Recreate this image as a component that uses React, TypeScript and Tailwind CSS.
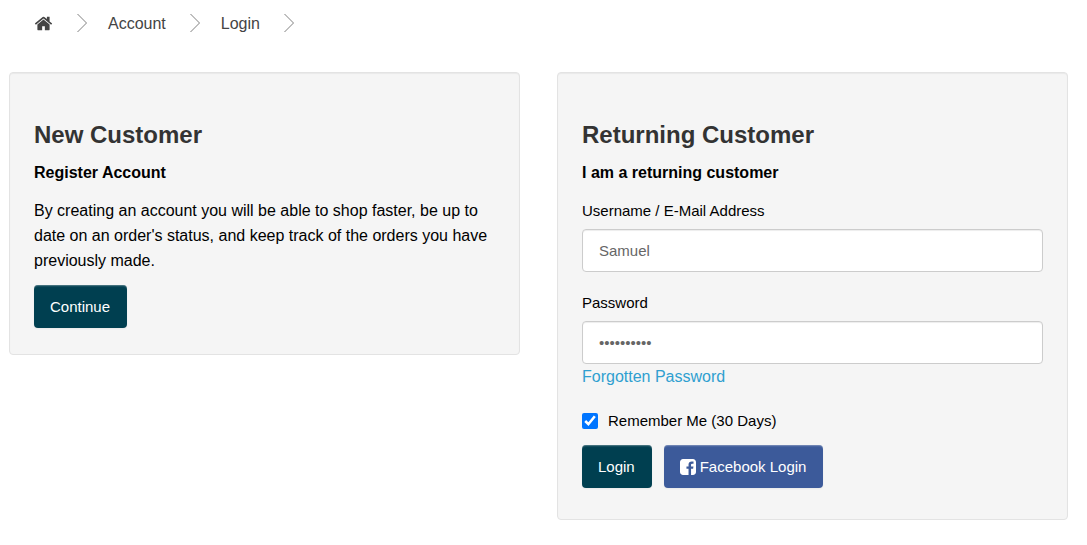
import { ReactNode, useState } from 'react';

const HomeIcon = () => (
  <svg className="h-[19px] w-[19px]" viewBox="0 0 1792 1792" fill="currentColor" aria-hidden="true">
    <path d="M1472 992v480q0 26-19 45t-45 19h-384v-384h-256v384h-384q-26 0-45-19t-19-45v-480q0-1 .5-3t.5-3l575-474 575 474q1 2 1 6zm223-69l-62 74q-8 9-21 11h-3q-13 0-21-7l-692-577-692 577q-12 8-24 7-13-2-21-11l-62-74q-8-10-7-23.5t11-21.5l719-599q32-26 76-26t76 26l244 204v-195q0-14 9-23t23-9h192q14 0 23 9t9 23v408l219 182q10 8 11 21.5t-7 23.5z" />
  </svg>
);

const FacebookIcon = () => (
  <svg className="h-4 w-4" viewBox="128 128 1536 1536" fill="currentColor" aria-hidden="true">
    <path d="M1376 128q119 0 203.5 84.5t84.5 203.5v960q0 119-84.5 203.5t-203.5 84.5h-188v-595h199l30-232h-229v-148q0-56 23.5-84t91.5-28l122-1v-207q-63-9-178-9-136 0-217.5 80t-81.5 226v171h-200v232h200v595h-532q-119 0-203.5-84.5t-84.5-203.5v-960q0-119 84.5-203.5t203.5-84.5h960z" />
  </svg>
);

const Crumb = ({ label, children }: { label?: string; children: ReactNode }) => (
  <li className="flex items-center gap-6">
    <a href="#" aria-label={label} className="hover:text-[#2f9fd0]">
      {children}
    </a>
    <svg className="h-5 w-[11px]" viewBox="0 0 11 20" fill="none" stroke="#808080" aria-hidden="true">
      <path d="M.5 1l9 9-9 9" />
    </svg>
  </li>
);

const Well = ({ title, subtitle, children }: { title: string; subtitle: string; children: ReactNode }) => (
  <section className="rounded border border-[#e3e3e3] bg-[#f5f5f5] px-6 pt-12 shadow-[inset_0_1px_1px_rgba(0,0,0,0.05)]">
    <h2 className="text-2xl leading-7 font-bold text-[#333]">{title}</h2>
    <p className="mt-[11px] font-bold">{subtitle}</p>
    {children}
  </section>
);

const buttonClass =
  'flex h-[43px] cursor-pointer items-center rounded pr-[17px] pl-4 text-[15px] text-white shadow-[inset_0_1px_0_rgba(255,255,255,0.2),inset_0_2px_1px_rgba(255,255,255,0.08),0_1px_2px_rgba(0,0,0,0.05)]';

const inputClass =
  'block h-[43px] w-full rounded border border-[#ccc] bg-white px-4 text-[15px] text-[#666] shadow-[inset_0_1px_1px_rgba(0,0,0,0.075)] outline-none focus:border-[#66afe9]';

export default function App() {
  const [username, setUsername] = useState('Samuel');
  const [password, setPassword] = useState('samuel1234');
  const [remember, setRemember] = useState(true);

  return (
    <div className="bg-white pr-[19px] pb-6 pl-[9px] font-['Liberation_Sans',Arial,sans-serif] text-base leading-[25px] text-black">
      <nav aria-label="Breadcrumb">
        <ol className="flex h-[46px] items-center gap-5 pl-[25px] text-[#444]">
          <Crumb label="Home">
            <HomeIcon />
          </Crumb>
          <Crumb>Account</Crumb>
          <Crumb>Login</Crumb>
        </ol>
      </nav>

      <main className="mt-[26px] grid grid-cols-2 items-start gap-[37px]">
        <Well title="New Customer" subtitle="Register Account">
          <p className="mt-[13px]">
            By creating an account you will be able to shop faster, be up to date on an order's status, and keep track
            of the orders you have previously made.
          </p>
          <button type="button" className={`${buttonClass} mt-3 mb-[26px] bg-[#003f50]`}>
            Continue
          </button>
        </Well>

        <Well title="Returning Customer" subtitle="I am a returning customer">
          <form className="mt-[13px] mb-[31px]" onSubmit={(e) => e.preventDefault()}>
            <label htmlFor="username" className="mb-[6px] block text-[15px]">
              Username / E-Mail Address
            </label>
            <input
              id="username"
              type="text"
              className={inputClass}
              value={username}
              onChange={(e) => setUsername(e.target.value)}
            />
            <label htmlFor="password" className="mt-[18px] mb-[6px] block text-[15px]">
              Password
            </label>
            <input
              id="password"
              type="password"
              className={inputClass}
              value={password}
              onChange={(e) => setPassword(e.target.value)}
            />
            <a href="#" className="block w-fit text-[#2f9fd0] hover:underline">
              Forgotten Password
            </a>
            <label className="mt-[19px] flex items-center gap-[10px] text-[15px]">
              <input
                type="checkbox"
                className="h-4 w-4 accent-[#0075ff]"
                checked={remember}
                onChange={(e) => setRemember(e.target.checked)}
              />
              Remember Me (30 Days)
            </label>
            <div className="mt-3 flex gap-3">
              <button type="submit" className={`${buttonClass} bg-[#003f50]`}>
                Login
              </button>
              <button type="button" className={`${buttonClass} gap-1 bg-[#3c5a9a]`}>
                <FacebookIcon />
                Facebook Login
              </button>
            </div>
          </form>
        </Well>
      </main>
    </div>
  );
}
